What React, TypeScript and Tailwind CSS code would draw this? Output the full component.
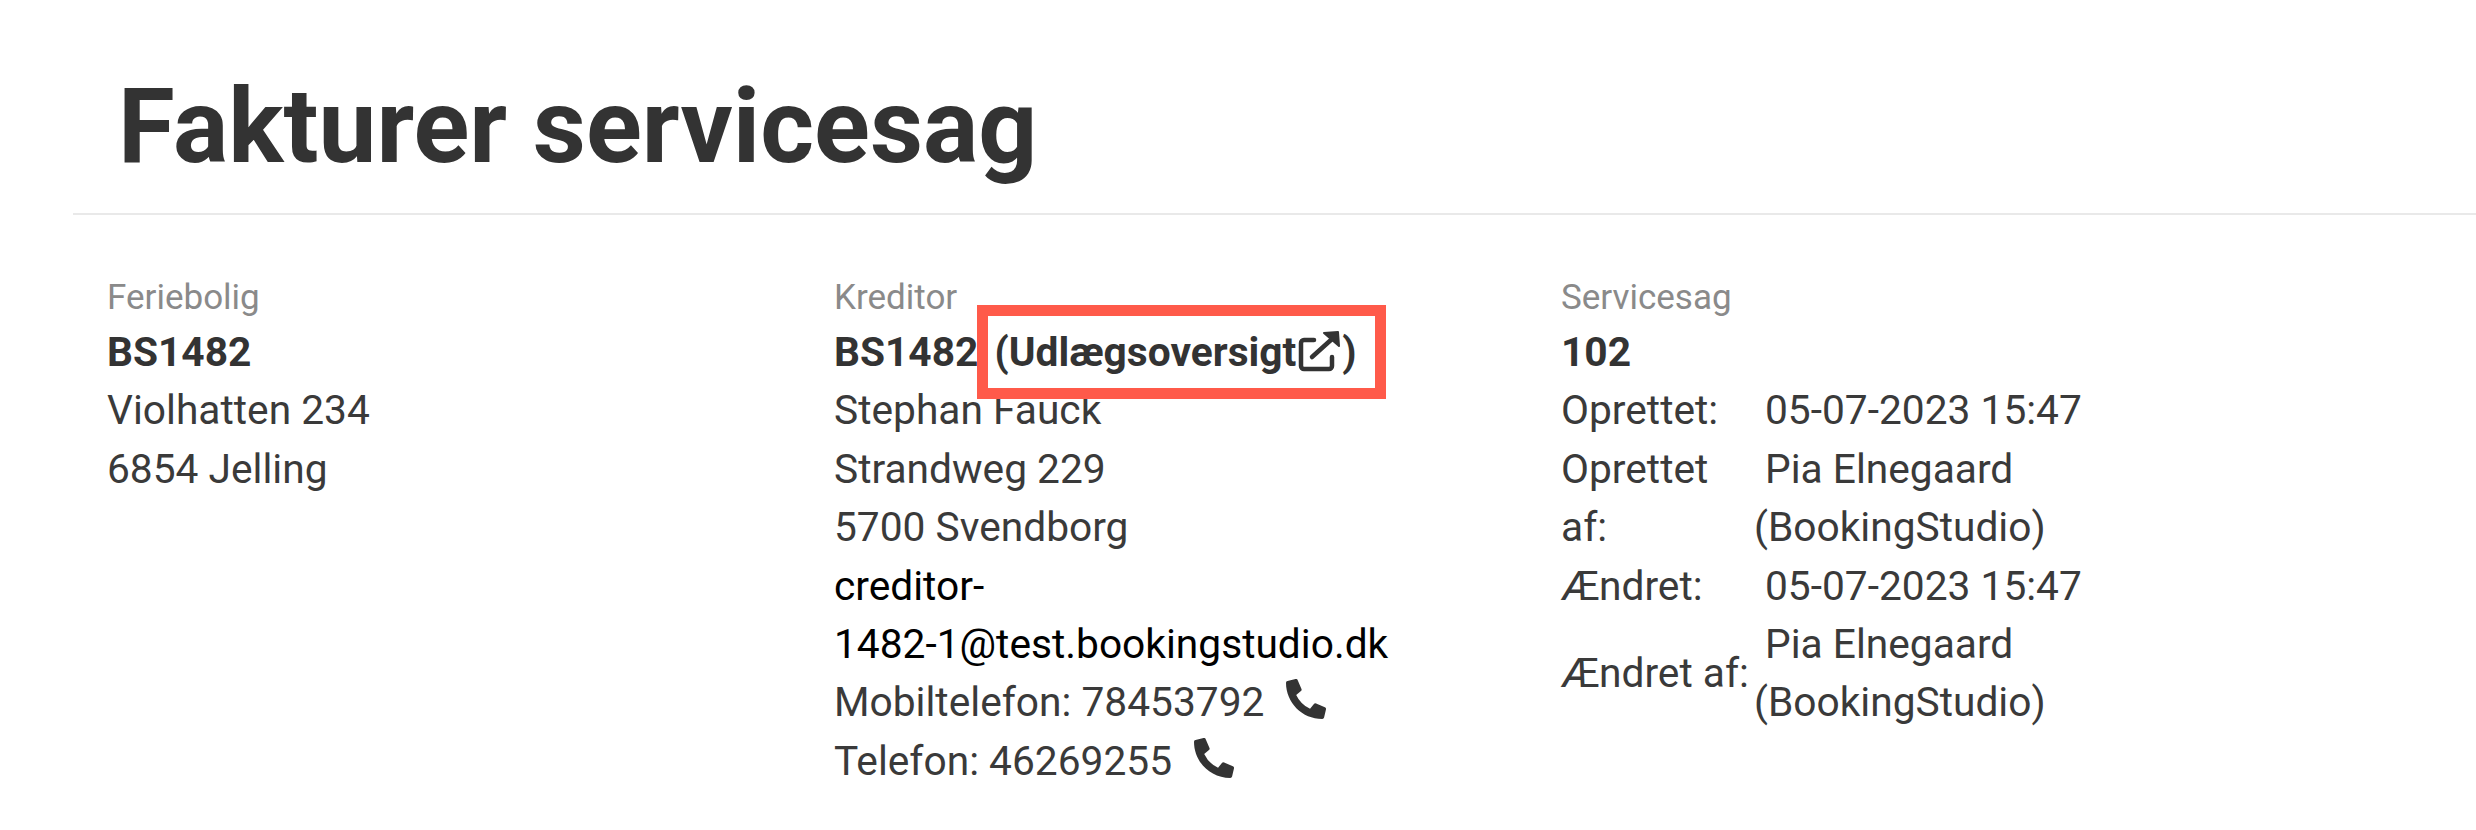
import { FaPhoneAlt } from "react-icons/fa";

// Header + three info columns of the service case invoice page.
const labelCls = "text-[35px] leading-[50px] text-[#8a8a8a]";
const lineCls = "text-[40.7px] leading-[58.4px]";
const cellCls = "p-0 align-middle";

function ExternalLinkIcon() {
  return (
    <svg viewBox="0 0 44 44" className="ml-[2px] inline-block h-[44px] w-[44px] align-[-7px]" fill="none" stroke="currentColor" strokeWidth="4.5" strokeLinecap="round" strokeLinejoin="round">
      <path d="M16 11H6a3 3 0 0 0-3 3v23a3 3 0 0 0 3 3h25a3 3 0 0 0 3-3v-9" />
      <path d="M14 28 34 10" />
      <path d="M26 4l14-1 1 14z" fill="currentColor" stroke="currentColor" strokeWidth="2" />
    </svg>
  );
}

function PhoneLine({ text }: { text: string }) {
  return (
    <div className={`${lineCls} text-[#3a3a3a]`}>
      {text}
      <FaPhoneAlt className="ml-[22px] inline-block h-[40px] w-[40px] align-[-3px] text-[#333]" />
    </div>
  );
}

export default function App() {
  return (
    <div className="min-h-[830px] bg-white font-['Roboto',sans-serif] text-[#333]">
      <div className="ml-[73px] border-b-2 border-[#e9e9e9] pt-[66px] pb-[25px] pl-[45px]">
        <h1 className="text-[103.4px] leading-[122px] font-bold text-[#333]">Fakturer servicesag</h1>
      </div>
      <div className="grid grid-cols-[727px_727px_1fr] pt-[58px] pl-[107px]">
        <div>
          <div className={labelCls}>Feriebolig</div>
          <div className={`${lineCls} font-bold`}>BS1482</div>
          <div className={`${lineCls} text-[#3a3a3a]`}>Violhatten 234</div>
          <div className={`${lineCls} text-[#3a3a3a]`}>6854 Jelling</div>
        </div>
        <div className="w-[580px]">
          <div className={labelCls}>Kreditor</div>
          <div className={`${lineCls} font-bold`}>
            BS1482{" "}
            <span className="relative ml-[6px]">
              (Udlægsoversigt
              <ExternalLinkIcon />)
              <span className="absolute -top-[23px] -right-[29px] -bottom-[23px] -left-[18px] border-[11px] border-[#ff5a4a]" />
            </span>
          </div>
          <div className={`${lineCls} text-[#3a3a3a]`}>Stephan Fauck</div>
          <div className={`${lineCls} text-[#3a3a3a]`}>Strandweg 229</div>
          <div className={`${lineCls} text-[#3a3a3a]`}>5700 Svendborg</div>
          <div className={`${lineCls} text-black`}>
            creditor-
            <br />
            1482-1@test.bookingstudio.dk
          </div>
          <PhoneLine text="Mobiltelefon: 78453792" />
          <PhoneLine text="Telefon: 46269255" />
        </div>
        <div>
          <div className={labelCls}>Servicesag</div>
          <div className={`${lineCls} font-bold`}>102</div>
          <table className={`${lineCls} w-[560px] table-fixed text-[#3a3a3a]`}>
            <tbody>
              <tr>
                <td className={`${cellCls} w-[193px]`}>Oprettet:</td>
                <td className={`${cellCls} indent-[11px] whitespace-nowrap`}>05-07-2023 15:47</td>
              </tr>
              <tr>
                <td className={cellCls}>
                  Oprettet
                  <br />
                  af:
                </td>
                <td className={`${cellCls} indent-[11px]`}>
                  Pia Elnegaard
                  <br />
                  (BookingStudio)
                </td>
              </tr>
              <tr>
                <td className={cellCls}>Ændret:</td>
                <td className={`${cellCls} indent-[11px] whitespace-nowrap`}>05-07-2023 15:47</td>
              </tr>
              <tr>
                <td className={cellCls}>Ændret af:</td>
                <td className={`${cellCls} indent-[11px]`}>
                  Pia Elnegaard
                  <br />
                  (BookingStudio)
                </td>
              </tr>
            </tbody>
          </table>
        </div>
      </div>
    </div>
  );
}
